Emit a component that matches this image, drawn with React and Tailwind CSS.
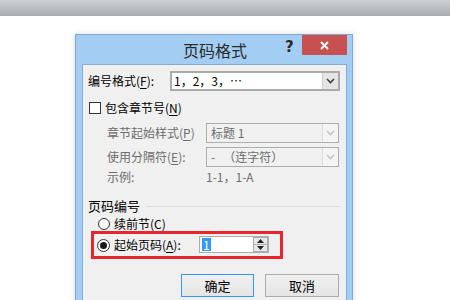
import React from "react";

const font = { fontFamily: '"Noto Sans CJK SC", "Noto Sans", sans-serif' };

function Chevron({ color = "#404040" }) {
  return (
    <svg width="9" height="6" viewBox="0 0 9 6">
      <path d="M1 1 L4.5 4.5 L8 1" fill="none" stroke={color} strokeWidth="1.6" />
    </svg>
  );
}

function U({ children }) {
  return <span className="underline underline-offset-2">{children}</span>;
}

export default function App() {
  return (
    <div className="w-[450px] h-[300px] overflow-hidden bg-white text-black" style={font}>
      <div className="h-[16px] bg-gradient-to-b from-[#cdd0d5] to-[#a9acb1]" />
      <div className="ml-[75px] mt-[18px] w-[278px] h-[300px] bg-[#a3cdf3] border border-[#80a8d0] shadow-[0_0_6px_rgba(0,0,0,0.15)] flex flex-col">
        <div className="h-[29px] flex items-start relative">
          <div className="flex-1 text-center text-[16px] leading-[30px] text-[#2b2b2b] pl-[2px]">页码格式</div>
          <div className="absolute left-[209px] top-[2px] text-[15px] font-bold text-[#2b2b2b] leading-[20px]" style={{ fontFamily: '"DejaVu Sans", sans-serif' }}>?</div>
          <div className="absolute right-[5px] top-0 w-[45px] h-[20px] bg-[#c75050] flex items-center justify-center">
            <svg width="9" height="9" viewBox="0 0 9 9">
              <path d="M1 1 L8 8 M8 1 L1 8" stroke="white" strokeWidth="2" />
            </svg>
          </div>
        </div>
        <div className="ml-[6px] mr-[5px] flex-1 bg-[#f0f0f0] border border-[#86acd3] flex flex-col text-[12px]">
          {/* Row 1 */}
          <div className="mt-[6px] h-[20px] flex items-center pl-[5px] pr-[6px]">
            <span className="w-[82px] leading-[20px]">编号格式(<U>F</U>):</span>
            <div className="flex-1 h-[20px] border-2 border-[#ababab] bg-white flex">
              <div className="flex-1 pl-[2px] leading-[16px]">1，2，3，…</div>
              <div className="w-[16px] bg-[#e5e5e5] border-l border-[#cfcfcf] flex items-center justify-center">
                <Chevron />
              </div>
            </div>
          </div>
          {/* Row 2 */}
          <div className="mt-[9px] h-[16px] flex items-center pl-[6px]">
            <div className="w-[12px] h-[12px] border border-[#333] bg-white" />
            <span className="ml-[4px]">包含章节号(<U>N</U>)</span>
          </div>
          {/* Row 3 */}
          <div className="mt-[7px] h-[20px] flex items-center pl-[24px] pr-[7px] text-[#6d6d6d]">
            <span className="w-[99px]">章节起始样式(<U>P</U>)</span>
            <div className="flex-1 h-[20px] border border-[#adadad] bg-[#f0f0f0] flex">
              <div className="flex-1 pl-[4px] leading-[18px]">标题 1</div>
              <div className="w-[16px] bg-[#f4f4f4] border-l border-[#dcdcdc] flex items-center justify-center">
                <Chevron color="#c4c4c4" />
              </div>
            </div>
          </div>
          {/* Row 4 */}
          <div className="mt-[4px] h-[20px] flex items-center pl-[24px] pr-[7px] text-[#6d6d6d]">
            <span className="w-[99px]">使用分隔符(<U>E</U>):</span>
            <div className="flex-1 h-[20px] border border-[#adadad] bg-[#f0f0f0] flex">
              <div className="flex-1 pl-[4px] leading-[18px] whitespace-pre">-   （连字符）</div>
              <div className="w-[16px] bg-[#f4f4f4] border-l border-[#dcdcdc] flex items-center justify-center">
                <Chevron color="#c4c4c4" />
              </div>
            </div>
          </div>
          {/* Row 5 */}
          <div className="mt-[2px] h-[16px] flex items-center pl-[24px] text-[#6d6d6d]">
            <span className="w-[99px]">示例:</span>
            <span>1-1，1-A</span>
          </div>
          {/* Group header */}
          <div className="mt-[13px] h-[16px] flex items-center pl-[5px] pr-[6px]">
            <span className="text-[13px]">页码编号</span>
            <div className="flex-1 ml-[6px] h-px bg-[#dcdcdc]" />
          </div>
          {/* Radio 1 */}
          <div className="mt-[2px] h-[16px] flex items-center pl-[15px]">
            <div className="w-[12px] h-[12px] rounded-full border border-[#333] bg-white" />
            <span className="ml-[4px]">续前节(<U>C</U>)</span>
          </div>
          {/* Radio 2 in red highlight */}
          <div className="-mt-[1px] ml-[8px] w-[192px] h-[28px] border-[3px] border-[#e8262e] flex items-center pl-[3px]">
            <div className="w-[13px] h-[13px] rounded-full border border-[#333] bg-white flex items-center justify-center">
              <div className="w-[7px] h-[7px] rounded-full bg-[#1a1a1a]" />
            </div>
            <span className="ml-[4px] w-[85px]">起始页码(<U>A</U>):</span>
            <div className="w-[70px] h-[17px] border border-[#abadb3] bg-white flex mb-[1px]">
              <div className="flex-1 pl-[2px] flex items-center">
                <span className="bg-[#3399ff] text-white leading-[13px] px-px">1</span>
              </div>
              <div className="w-[15px] border border-[#adadad] bg-[#e8e8e8] flex flex-col">
                <div className="flex-1 flex items-center justify-center border-b border-[#adadad]">
                  <svg width="7" height="4" viewBox="0 0 7 4"><path d="M0 4 L3.5 0 L7 4Z" fill="#222" /></svg>
                </div>
                <div className="flex-1 flex items-center justify-center">
                  <svg width="7" height="4" viewBox="0 0 7 4"><path d="M0 0 L3.5 4 L7 0Z" fill="#222" /></svg>
                </div>
              </div>
            </div>
          </div>
          {/* Buttons */}
          <div className="mt-[15px] flex justify-end pr-[7px] gap-[11px] text-[13px]">
            <div className="w-[73px] h-[23px] border border-[#3399ff] bg-gradient-to-b from-[#f0f0f0] to-[#e5e5e5] flex items-center justify-center">确定</div>
            <div className="w-[74px] h-[23px] border border-[#adadad] bg-gradient-to-b from-[#f0f0f0] to-[#e5e5e5] flex items-center justify-center">取消</div>
          </div>
        </div>
      </div>
    </div>
  );
}
